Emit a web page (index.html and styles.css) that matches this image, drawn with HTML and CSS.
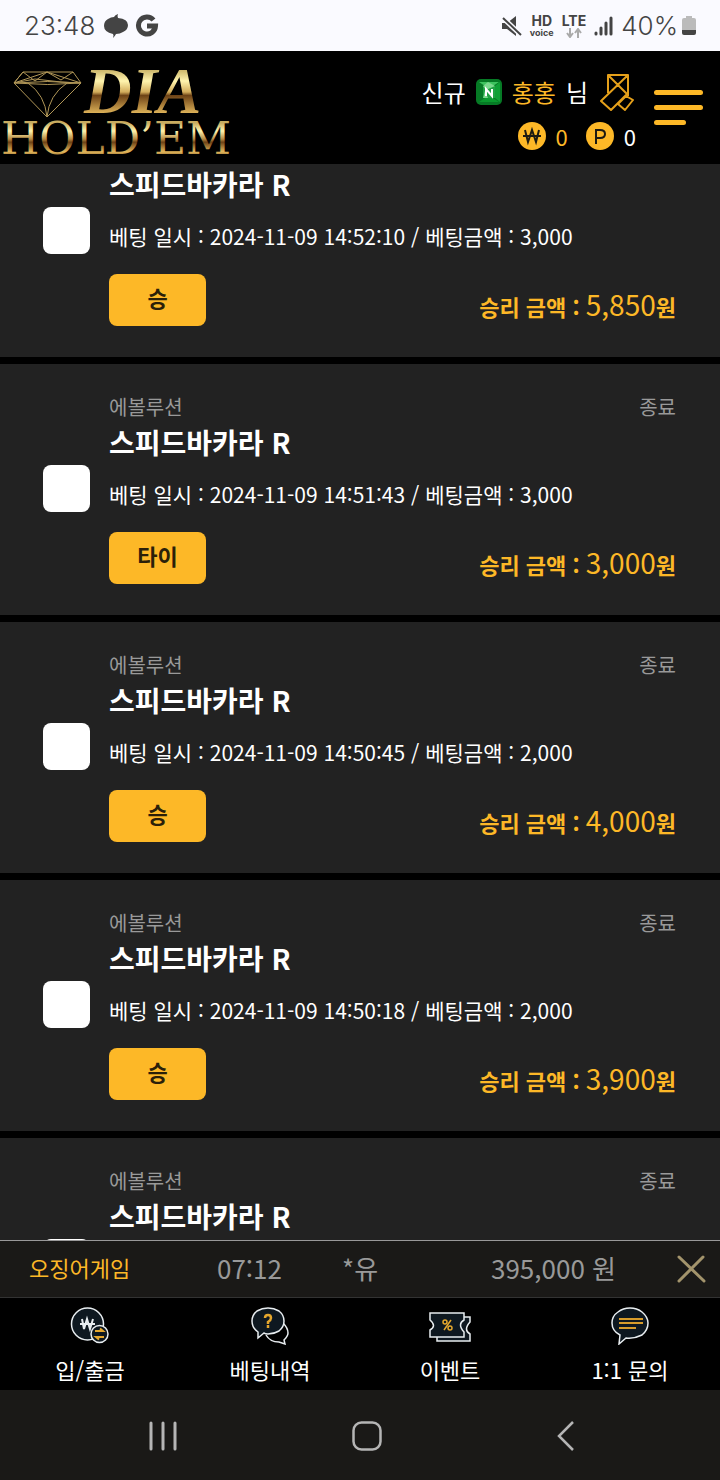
FILE: index.html
```html
<!DOCTYPE html>
<html lang="ko">
<head>
    <meta charset="UTF-8">
    <meta name="viewport" content="width=device-width, initial-scale=1.0">
    <title>DIA HOLD'EM</title>
    <link rel="stylesheet" href="styles.css">
</head>
<body>

    <div class="status-bar">
        <span class="clock">23:48</span>
        <svg width="26" height="26" viewBox="0 0 26 26" fill="#444"><path d="M15 1Q14 3 15 5q10 1 10 7 0 5-5 7-3 2-7 2-1 2-3 4 1-3 0-4-9-2-9-8 0-5 4-7 3-2 6-2 1-2 4-3z"/></svg>
        <svg class="google" width="24" height="24" viewBox="0 0 24 24" fill="none" stroke="#444" stroke-width="5"><path d="M18.500 6A8.500 8.500 0 1 0 20.500 12H12"/></svg>
        <div class="status-right">
            <svg width="20" height="22" viewBox="0 0 20 22" fill="#444"><path d="M0 8h5l9-7v20l-9-7H0z"/><path d="M0 2l19 18" stroke="#fafaff" stroke-width="5"/><path d="M1 3l18 17" stroke="#444" stroke-width="2"/></svg>
            <span class="hd">HD<small>voice</small></span>
            <span class="lte">LTE
                <svg width="16" height="10" viewBox="0 0 16 10" fill="none" stroke="#aaa" stroke-width="2"><path d="M4 0v9M1 5l3 4 3-4M12 10V1M9 5l3-4 3 4"/></svg>
            </span>
            <svg width="19" height="20" viewBox="0 0 19 20" stroke="#444" stroke-width="3" stroke-linecap="round"><path d="M2 17v1M7 12v6M12 7v11M17 2v16"/></svg>
            <span class="battery-text">40%</span>
            <svg width="14" height="20" viewBox="0 0 14 20"><path d="M4 0h6v2h2q2 0 2 2v10H0V4q0-2 2-2h2z" fill="#bbb"/><path d="M0 14h14v3q0 2-2 2H2q-2 0-2-2z" fill="#444"/></svg>
        </div>
    </div>

    <header class="header">
        <svg class="logo" width="240" height="112" viewBox="0 0 240 112" role="img" aria-label="DIA HOLD'EM">
            <defs>
                <linearGradient id="goldTop" gradientUnits="userSpaceOnUse" x1="0" y1="18" x2="0" y2="62">
                    <stop offset="0" stop-color="#ccb66a"/>
                    <stop offset="0.25" stop-color="#fff4ae"/>
                    <stop offset="0.5" stop-color="#d3ad5b"/>
                    <stop offset="0.58" stop-color="#6d4216"/>
                    <stop offset="1" stop-color="#e3b85c"/>
                </linearGradient>
                <linearGradient id="goldBottom" gradientUnits="userSpaceOnUse" x1="0" y1="71" x2="0" y2="103">
                    <stop offset="0" stop-color="#c8ac60"/>
                    <stop offset="0.25" stop-color="#fff4ae"/>
                    <stop offset="0.5" stop-color="#b68a44"/>
                    <stop offset="0.6" stop-color="#6d4216"/>
                    <stop offset="0.9" stop-color="#e3b85c"/>
                    <stop offset="1" stop-color="#a67c38"/>
                </linearGradient>
            </defs>
            <g fill="none" stroke="#b09657" stroke-width="1">
                <path d="M23 20h50l8 11-34 34-33-34zM23 20l-9 11M23 20l12 9 12-9 14 8 12-8M14 31l21-4 26 3 20 1M14 31l33-11 34 11M14 31q33-3 67 0q-33 3-67 0"/>
                <path d="M28 31q17 12 19 34q2-22 20-34"/>
            </g>
            <text class="logo-dia" x="84" y="61" fill="url(#goldTop)">DIA</text>
            <text class="logo-holdem" x="1" y="102" fill="url(#goldBottom)">HOLD’EM</text>
        </svg>

        <div class="user">
            <div class="user-row">
                <span>신규</span>
                <svg class="gem" width="26" height="26" viewBox="0 0 26 26"><rect width="26" height="26" rx="5" fill="#067a25"/><path d="M3 3l6 4h8l6-4z" fill="#3ec35e"/><path d="M19 7v12l5 4V3z" fill="#0fa035"/><path d="M3 23l6-4h8l6 4z" fill="#0a9a2e"/><path d="M7 7h12v12H7z" fill="#21a244"/><path d="M7 7l5-4 7 4-9 4zM7 19l2-7 3 7z" fill="#7bd98d"/><path d="M10 17v-7l6 7v-7" fill="none" stroke="#fff" stroke-width="2"/></svg>
                <span class="gold">홍홍</span>
                <span>님</span>
                <button class="icon-button envelope" aria-label="쪽지">
                    <svg width="34" height="38" viewBox="0 0 34 38" fill="none" stroke="#e5a01a" stroke-width="2" stroke-linejoin="round"><path d="M8 20V2h20v21M8 2l20 20M28 2L1 28l10 9 16-16M18 31l8-8 7 4-8 10zM18 31l7 6"/></svg>
                </button>
            </div>
            <div class="user-row money">
                <svg width="28" height="28" viewBox="0 0 28 28"><circle cx="14" cy="14" r="14" fill="#fdb827"/><path d="M7 8l3 12 4-12 4 12 3-12M5 14h18" fill="none" stroke="#1c1a12" stroke-width="2"/></svg>
                <span class="gold">0</span>
                <svg class="point" width="28" height="28" viewBox="0 0 28 28"><circle cx="14" cy="14" r="14" fill="#fdb827"/><path d="M10 22V8h4q5 0 5 4t-5 4h-4" fill="none" stroke="#1c1a12" stroke-width="2"/></svg>
                <span>0</span>
            </div>
        </div>
        <button class="icon-button menu" aria-label="메뉴">
            <span></span>
            <span></span>
            <span></span>
        </button>
    </header>

    <main class="list" id="betList">
        <article class="card">
            <input type="checkbox" class="check" aria-label="14:52:10 베팅 선택">
            <div class="card-body">
                <div class="card-top"></div>
                <h2>스피드바카라 R</h2>
                <p class="bet">베팅 일시 : 2024-11-09 14:52:10 / 베팅금액 : 3,000</p>
                <div class="card-bottom">
                    <button class="result">승</button>
                    <div class="win">승리 금액 : <span>5,850</span>원</div>
                </div>
            </div>
        </article>
        <article class="card">
            <input type="checkbox" class="check" aria-label="14:51:43 베팅 선택">
            <div class="card-body">
                <div class="card-top"><span>에볼루션</span><span class="state">종료</span></div>
                <h2>스피드바카라 R</h2>
                <p class="bet">베팅 일시 : 2024-11-09 14:51:43 / 베팅금액 : 3,000</p>
                <div class="card-bottom">
                    <button class="result">타이</button>
                    <div class="win">승리 금액 : <span>3,000</span>원</div>
                </div>
            </div>
        </article>
        <article class="card">
            <input type="checkbox" class="check" aria-label="14:50:45 베팅 선택">
            <div class="card-body">
                <div class="card-top"><span>에볼루션</span><span class="state">종료</span></div>
                <h2>스피드바카라 R</h2>
                <p class="bet">베팅 일시 : 2024-11-09 14:50:45 / 베팅금액 : 2,000</p>
                <div class="card-bottom">
                    <button class="result">승</button>
                    <div class="win">승리 금액 : <span>4,000</span>원</div>
                </div>
            </div>
        </article>
        <article class="card">
            <input type="checkbox" class="check" aria-label="14:50:18 베팅 선택">
            <div class="card-body">
                <div class="card-top"><span>에볼루션</span><span class="state">종료</span></div>
                <h2>스피드바카라 R</h2>
                <p class="bet">베팅 일시 : 2024-11-09 14:50:18 / 베팅금액 : 2,000</p>
                <div class="card-bottom">
                    <button class="result">승</button>
                    <div class="win">승리 금액 : <span>3,900</span>원</div>
                </div>
            </div>
        </article>
        <article class="card">
            <input type="checkbox" class="check" aria-label="베팅 선택">
            <div class="card-body">
                <div class="card-top"><span>에볼루션</span><span class="state">종료</span></div>
                <h2>스피드바카라 R</h2>
            </div>
        </article>
    </main>

    <div class="ticker">
        <span class="gold">오징어게임</span>
        <span class="ticker-text">07:12</span>
        <span class="ticker-text">*유</span>
        <span class="ticker-text">395,000 원</span>
        <button class="icon-button" aria-label="닫기">
            <svg width="29" height="28" viewBox="0 0 29 28" stroke="#a3946c" stroke-width="3" stroke-linecap="round"><path d="M2 2l25 24M26 2L2 26"/></svg>
        </button>
    </div>

    <nav class="tabs">
        <a href="#money">
            <svg width="40" height="38" viewBox="0 0 40 38" fill="#0e1820" stroke="#e8edf0" stroke-width="1.500"><circle cx="17.500" cy="17" r="16"/><path d="M12 12l2 10 3-10 3 10 3-10M10 17h15" fill="none" stroke-width="2"/><circle cx="29.500" cy="27" r="8.500"/><path d="M25 24h8l-3-2.500M34 30h-8l3 2.500" fill="none" stroke="#e5a72d" stroke-width="2"/></svg>
            <span>입/출금</span>
        </a>
        <a href="#bets">
            <svg width="40" height="38" viewBox="0 0 40 38" fill="#0e1820" stroke="#e8edf0" stroke-width="1.500"><path d="M33 16q5 5 5 10 0 3-4 7l1 4-6-2q-9 0-13-7" fill="#000"/><path d="M8 25Q2 21 2 14 2 8 7 4 12 1 18 1q6 0 11 3 5 4 5 10 0 6-5 10-5 3-11 3-3 0-4-1l-6 5z"/><path d="M15 11q0-3 3-3t3 3q0 2-3 4v2M18 18v3" fill="none" stroke="#e5a72d" stroke-width="2.500"/></svg>
            <span>베팅내역</span>
        </a>
        <a href="#events">
            <svg width="42" height="38" viewBox="0 0 42 38" fill="#0e1820" stroke="#e8edf0" stroke-width="1.500"><path d="M8 29v5h33v-7q-7-4 0-12v-5h-7"/><path d="M1 6h34v7q-7 4 0 12v5H1v-7q7-4 0-10z"/><circle cx="16" cy="15" r="2" fill="none" stroke="#e5a72d"/><circle cx="21" cy="21" r="2" fill="none" stroke="#e5a72d"/><path d="M22 13l-7 10" stroke="#e5a72d"/></svg>
            <span>이벤트</span>
        </a>
        <a href="#contact">
            <svg width="40" height="38" viewBox="0 0 40 38" fill="#0e1820" stroke="#e8edf0" stroke-width="1.500"><path d="M10 28Q2 24 2 16 2 9 8 5 13 1 20 1q7 0 12 4 6 5 6 11 0 7-6 12-8 4-16 3l-7 6z"/><path d="M9 12h24M9 16h24M9 21h17" stroke="#d79c2b" stroke-width="2"/></svg>
            <span>1:1 문의</span>
        </a>
    </nav>

    <div class="system-nav">
        <button class="icon-button" aria-label="최근 앱">
            <svg width="28" height="30" viewBox="0 0 28 30" stroke="#b5b5b5" stroke-width="3" stroke-linecap="round"><path d="M2 2v26M14 2v26M26 2v26"/></svg>
        </button>
        <button class="icon-button" aria-label="홈">
            <svg width="30" height="30" viewBox="0 0 30 30" fill="none" stroke="#b5b5b5" stroke-width="2.500"><rect x="1.500" y="1.500" width="27" height="27" rx="8"/></svg>
        </button>
        <button class="icon-button" aria-label="뒤로">
            <svg width="18" height="30" viewBox="0 0 18 30" fill="none" stroke="#b5b5b5" stroke-width="2.500"><path d="M16 1L2 15l14 14"/></svg>
        </button>
    </div>

    <script src="script.js"></script>
</body>
</html>
```
FILE: styles.css
```css
* {
    box-sizing: border-box;
}

body {
    display: flex;
    flex-direction: column;
    height: 100vh;
    margin: 0;
    background: #000;
    color: #fff;
    font-family: "Noto Sans CJK KR", sans-serif;
    overflow: hidden;
}

svg {
    display: block;
    flex-shrink: 0;
}

button {
    font-family: inherit;
    cursor: pointer;
}

.icon-button {
    padding: 0;
    border: none;
    background: none;
}

.gold {
    color: #fdb827;
}

/* status bar */
.status-bar {
    display: flex;
    align-items: center;
    flex-shrink: 0;
    height: 51px;
    padding: 0 24px;
    background: #fafaff;
    color: #444;
    font-family: Inter, sans-serif;
    font-size: 26px;
    font-weight: 300;
}

.clock {
    margin-right: 8px;
}

.google {
    margin-left: 6px;
}

.status-right {
    display: flex;
    align-items: center;
    gap: 8px;
    margin-left: auto;
}

.hd,
.lte {
    display: flex;
    flex-direction: column;
    align-items: center;
    font-size: 14px;
    line-height: 14px;
    font-weight: 700;
}

.hd small {
    font-size: 9px;
    line-height: 10px;
}

.battery-text {
    margin-right: -4px;
}

/* header */
.header {
    display: flex;
    align-items: center;
    flex-shrink: 0;
    height: 113px;
    padding-right: 17px;
}

.logo-dia {
    font: italic 700 66px "Liberation Serif", serif;
}

.logo-holdem {
    font: 400 44px "DejaVu Serif", serif;
}

.user {
    margin-left: auto;
    margin-right: 18px;
    padding-top: 12px;
}

.user-row {
    display: flex;
    align-items: center;
    justify-content: flex-end;
    gap: 10px;
    height: 44px;
    font-size: 24px;
}

.envelope {
    margin: 0 2px;
}

.money {
    font-size: 22px;
}

.point {
    margin-left: 8px;
}

.menu {
    display: flex;
    flex-direction: column;
    gap: 10px;
    width: 49px;
}

.menu span {
    width: 100%;
    height: 5px;
    border-radius: 3px;
    background: #fdb827;
}

.menu span:last-child {
    width: 32px;
}

/* betting history */
.list {
    flex: 1;
    min-height: 0;
    overflow-y: auto;
    scrollbar-width: none;
}

.card {
    display: flex;
    align-items: center;
    gap: 19px;
    min-height: 251px;
    margin-bottom: 7px;
    padding: 28px 44px 30px 43px;
    background: #222;
}

.check {
    appearance: none;
    flex-shrink: 0;
    width: 47px;
    height: 47px;
    margin: 0;
    border-radius: 8px;
    background: #fff;
}

.check:checked {
    background: #fdb827;
}

.card-body {
    flex: 1;
    align-self: flex-start;
}

.card-top {
    display: flex;
    justify-content: space-between;
    min-height: 30px;
    color: #999;
    font-size: 20px;
    line-height: 30px;
}

.card h2 {
    margin: 0;
    font-size: 28px;
    font-weight: 700;
    line-height: 40px;
}

.bet {
    margin: 16px 0 22px;
    font-size: 21px;
    line-height: 32px;
}

.card-bottom {
    display: flex;
    align-items: center;
    justify-content: space-between;
    height: 52px;
}

.result {
    width: 97px;
    height: 52px;
    padding: 0 0 6px;
    border: none;
    border-radius: 8px;
    background: #fdb827;
    color: #2b2009;
    font-size: 22px;
    font-weight: 700;
}

.win {
    padding-top: 10px;
    color: #fdb827;
    font-size: 22px;
    font-weight: 700;
    line-height: 44px;
}

.win span {
    font-size: 28px;
    font-weight: 400;
}

/* withdrawal ticker */
.ticker {
    display: grid;
    grid-template-columns: 188fr 125fr 149fr 186fr 29px;
    align-items: center;
    flex-shrink: 0;
    height: 58px;
    padding: 0 14px 0 29px;
    border-top: 1px solid #999;
    border-bottom: 1px solid #333;
    background: #1a1917;
    font-size: 22px;
}

.ticker span {
    padding-bottom: 4px;
}

.ticker-text {
    color: #999;
    font-size: 26px;
}

/* bottom tabs */
.tabs {
    display: grid;
    grid-template-columns: repeat(4, 1fr);
    flex-shrink: 0;
    height: 92px;
    background: #000;
}

.tabs a {
    display: flex;
    flex-direction: column;
    align-items: center;
    gap: 8px;
    padding-top: 9px;
    color: #fff;
    font-size: 22px;
    line-height: 32px;
    text-decoration: none;
}

.system-nav {
    display: flex;
    align-items: center;
    justify-content: space-between;
    flex-shrink: 0;
    height: 90px;
    padding: 2px 145px 0 149px;
    background: #1a1917;
}
```
FILE: script.js
```javascript
// start scrolled past the top edge of the first card
document.getElementById('betList').scrollTop = 58;
```
